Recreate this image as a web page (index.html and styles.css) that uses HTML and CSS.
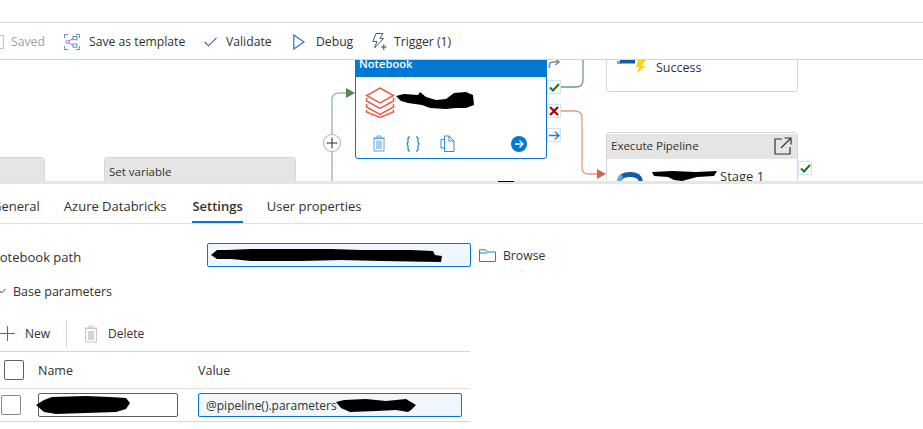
FILE: index.html
```html
<!DOCTYPE html>
<html lang="en">
<head>
<meta charset="utf-8">
<title>Pipeline editor</title>
<link rel="stylesheet" href="styles.css">
</head>
<body>
<div class="app">
  <div class="topbar"></div>
  <div class="toolbar">
    <div class="tool tool-saved">
      <svg class="ic-saved" width="4" height="14" viewBox="0 0 4 14"><path d="M-4 .5H3.5V13.5H-4" fill="none" stroke="#a6c8e8"/></svg>
      <span class="muted">Saved</span>
    </div>
    <div class="tool tool-template">
      <svg width="16" height="16" viewBox="0 0 16 16" fill="none" stroke-width="1"><path d="M.5 4V.5H4M12 .5h3.5V4M15.500 12v3.500H12M4 15.500H.5V12" stroke="#5b8fd0"/><circle cx="3.500" cy="8" r="1.600" stroke="#a875b8"/><rect x="9" y="2.500" width="4" height="3.200" stroke="#5b8fd0"/><rect x="9" y="10" width="4" height="3.200" stroke="#5b8fd0"/><path d="M5 7 9 4.500M5 9l4 2.500" stroke="#a875b8"/></svg>
      <span>Save as template</span>
    </div>
    <div class="tool tool-validate">
      <svg width="13" height="10" viewBox="0 0 13 10" fill="none"><path d="M.8 5 4.500 8.800 12.500.8" stroke="#2f5fa8" stroke-width="1.100"/></svg>
      <span>Validate</span>
    </div>
    <div class="tool tool-debug">
      <svg width="12" height="16" viewBox="0 0 12 16" fill="none"><path d="M.8 1v14L11 8z" stroke="#2f6fc4" stroke-width="1.200"/></svg>
      <span>Debug</span>
    </div>
    <div class="tool tool-trigger">
      <svg width="15" height="18" viewBox="0 0 15 18" fill="none" stroke="#3d5f8f" stroke-width="1"><path d="M4 .5h7L8 5.500h3.500L2.500 15 5 8.500H.8z"/><path d="M9 14h5.500M11.800 11.500v5.500" stroke="#444"/></svg>
      <span>Trigger (1)</span>
    </div>
  </div>

  <div class="canvas">
    <svg class="wires" width="923" height="121" viewBox="0 0 923 121" fill="none">
      <path d="M332 121V40q0-7 7-7h8" stroke="#9cc39c" stroke-width="1.500"/>
      <path d="M346 28l9 5-9 5z" fill="#4c8c4c"/>
      <path d="M560 27h16q7 0 7-7V0" stroke="#6ba06b" stroke-width="1.300"/>
      <path d="M560 51h15q7 0 7 7v50q0 6 7 6h9" stroke="#e89a80" stroke-width="1.300"/>
      <path d="M597 109l9 5-9 5z" fill="#d4674a"/>
    </svg>

    <div class="node node-stub">
      <div class="node-head"></div>
    </div>
    <div class="node node-setvar">
      <div class="node-head"><span>Set variable</span></div>
    </div>

    <div class="plus">
      <svg width="12" height="12" viewBox="0 0 12 12"><path d="M6 .5v11M.5 6h11" stroke="#333" stroke-width="1.100"/></svg>
    </div>

    <div class="node-notebook">
      <div class="nb-head">Notebook</div>
      <div class="nb-body">
        <svg class="bricks" width="30" height="31" viewBox="0 0 30 31" fill="none" stroke="#ef5b47" stroke-width="1.500">
          <path d="M15 1 28.500 8.500 15 16 1.500 8.500z"/>
          <path d="M1.500 11v3L15 21.500 28.500 14v-3"/>
          <path d="M1.500 17v3L15 27.500 28.500 20v-3"/>
          <path d="M1.500 23v2L15 30.500 28.500 25v-2"/>
        </svg>
        <svg class="blot" width="78" height="19" viewBox="0 0 78 19"><path d="M0 5 8 3 22 4 24 1 30 6 40 9 50 8 58 2 70 1 77 4 78 14 70 17 60 17 50 18 34 17 26 14 12 12 5 10z" fill="#000"/></svg>
      </div>
      <div class="nb-actions">
        <svg class="nb-ic" width="14" height="17" viewBox="0 0 14 17"><path d="M1 3h12M5 3V1h4v2" stroke="#5ba3e0" fill="none"/><path d="M2 3.500h10V16H2z" fill="#fff" stroke="#5ba3e0"/><path d="M4 5.500h6V14H4z" fill="#a7d0f0"/></svg>
        <svg class="nb-ic" width="14" height="16" viewBox="0 0 14 16" fill="none" stroke="#0078d4" stroke-width="1.100"><path d="M4 .8Q2 .8 2 3v3q0 2-1.500 2Q2 8 2 10v3q0 2.200 2 2.200M10 .8q2 0 2 2.200v3q0 2 1.500 2Q12 8 12 10v3q0 2.200-2 2.200"/></svg>
        <svg class="nb-ic" width="15" height="17" viewBox="0 0 15 17" fill="none" stroke="#2f8ad8"><path d="M4.500 4.500H1V13h3.500M4.500 1H9l5 5v10.500H4.500z"/><path d="M9 1v5h5"/></svg>
        <span class="nb-go">
          <svg width="10" height="10" viewBox="0 0 10 10" fill="none" stroke="#fff" stroke-width="1.300"><path d="M1 5h8M5.500 1.500 9 5 5.500 8.500"/></svg>
        </span>
      </div>
    </div>

    <div class="side side-skip"><svg width="12" height="10" viewBox="0 0 12 10" fill="none"><path d="M1.500 10V7q0-3 4-3h5M7.500 1 11 4 7.500 7" stroke="#8a8a8a" stroke-width="1.600"/></svg></div>
    <div class="side side-ok"><svg width="11" height="9" viewBox="0 0 11 9" fill="none"><path d="M1 4.500 4 7.500 10 1" stroke="#107c10" stroke-width="2"/></svg></div>
    <div class="side side-fail"><svg width="10" height="10" viewBox="0 0 10 10" fill="none"><path d="M1 1l8 8M9 1 1 9" stroke="#a80000" stroke-width="2.200"/></svg></div>
    <div class="side side-done"><svg width="11" height="9" viewBox="0 0 11 9" fill="none"><path d="M0 4.500h10M6 .8l4 3.700-4 3.700" stroke="#1a7ed4" stroke-width="1.300"/></svg></div>

    <div class="node node-success">
      <svg class="ic-pipe" width="30" height="13" viewBox="0 0 30 13"><path d="M0 1h4v3H0z" fill="#59b4d9"/><path d="M3 0h15v3.500H3z" fill="#0f5da8"/><path d="M21 0h8l-5 6h5L20 13l2-6h-3z" fill="#fcd116"/></svg>
      <span>Success</span>
    </div>

    <div class="node node-exec">
      <div class="node-head exec-head">
        <span>Execute Pipeline</span>
        <svg width="18" height="18" viewBox="0 0 18 18" fill="none" stroke="#333" stroke-width="1.200"><path d="M8 2H1v15h15v-7M7 11 17 1M10.500 1H17v6.500"/></svg>
      </div>
      <div class="exec-body">
        <svg width="27" height="12" viewBox="0 0 27 12"><path d="M0 12Q0 1 13 1T26 12h-4Q22 6 13 6T4 12z" fill="#0f5da8"/><path d="M0 12Q0 5 4 3l2 3Q4 8 4 12z" fill="#59b4d9"/></svg>
        <svg class="blot2" width="65" height="10" viewBox="0 0 65 10"><path d="M0 1 20 0 44 1 65 0 62 5 45 6 30 10 22 9 16 6 2 5z" fill="#000"/></svg>
        <span class="stage">Stage 1</span>
      </div>
    </div>
    <div class="side side-exec"><svg width="11" height="9" viewBox="0 0 11 9" fill="none"><path d="M1 4.500 4 7.500 10 1" stroke="#107c10" stroke-width="2"/></svg></div>
  </div>

  <div class="divider"><span class="grip"></span></div>

  <div class="tabs">
    <span class="tab tab-general">General</span>
    <span class="tab">Azure Databricks</span>
    <span class="tab tab-active">Settings</span>
    <span class="tab">User properties</span>
  </div>

  <div class="panel">
    <div class="path-row">
      <label class="path-label">Notebook path</label>
      <div class="field field-path">
        <svg width="231" height="15" viewBox="0 0 231 15"><path d="M0 7 6 2 16 2 40 1 120 1 150 2 200 2 222 3 224 7 231 8 230 14 170 13 130 12 90 13 40 13 20 11 6 11z" fill="#000"/></svg>
      </div>
      <svg class="folder" width="17" height="13" viewBox="0 0 17 13" fill="none" stroke="#2f7fc8"><path d="M.5 12.500V.8h6l2 2.200h8v9.500zM.5 4h8"/></svg>
      <span>Browse</span>
    </div>
    <div class="section">
      <svg width="6" height="5" viewBox="0 0 6 5" fill="none"><path d="M-1 1 1.500 4 5.500 0" stroke="#444"/></svg>
      <span>Base parameters</span>
    </div>
    <div class="actions">
      <svg width="15" height="15" viewBox="0 0 15 15"><path d="M7.500 0v15M0 7.500h15" stroke="#2b78c5" stroke-width="1.100"/></svg>
      <span class="act-new">New</span>
      <span class="act-sep"></span>
      <svg class="act-trash" width="14" height="18" viewBox="0 0 14 18" fill="none"><path d="M.5 3h13M5 3V1h4v2" stroke="#c8c8c8"/><path d="M1.500 3.500h11V17h-11z" stroke="#c8c8c8"/><path d="M4 6h6v9H4z" fill="#dfcfcf"/></svg>
      <span>Delete</span>
    </div>
    <div class="grid grid-head">
      <span class="check check-head"></span>
      <span class="col-h">Name</span>
      <span class="col-h">Value</span>
    </div>
    <div class="grid grid-row">
      <span class="check check-row"></span>
      <div class="field field-name">
        <svg width="94" height="20" viewBox="0 0 94 20"><path d="M0 10 8 5 16 2 50 1 74 2 90 3 94 8 90 14 80 17 50 18 20 19 8 17z" fill="#000"/></svg>
      </div>
      <div class="field field-value">
        <span>@pipeline().parameters</span>
        <svg width="82" height="15" viewBox="0 0 82 15"><path d="M0 4 8 2 30 1 50 3 70 1 80 7 75 12 72 14 60 12 40 13 14 14 5 10z" fill="#000"/></svg>
      </div>
    </div>
  </div>
</div>
</body>
</html>
```
FILE: styles.css
```css
* { box-sizing: border-box; }
html, body { margin: 0; padding: 0; background: #fff; }
body {
  width: 923px;
  height: 429px;
  overflow: hidden;
  font-family: "Open Sans", "Noto Sans", "Liberation Sans", sans-serif;
  font-size: 12px;
  color: #323130;
}
.app { width: 923px; height: 429px; overflow: hidden; }

.topbar { height: 23px; border-bottom: 1px solid #d6d6d6; }
.toolbar {
  height: 37px;
  border-bottom: 1px solid #d6d6d6;
  display: flex;
  align-items: center;
  padding-top: 1px;
  font-size: 12.200px;
}
.tool { display: flex; align-items: center; }
.muted { color: #a19f9d; }
.tool-saved { gap: 7px; width: 64px; }
.tool-template { gap: 9px; width: 140px; }
.tool-validate { gap: 9px; width: 89px; }
.tool-debug { gap: 11px; width: 79px; }
.tool-trigger { gap: 7px; }

.canvas { position: relative; height: 121px; overflow: hidden; background: #fff; }
.wires { position: absolute; left: 0; top: 0; }

.node {
  position: absolute;
  width: 192px;
  background: #fff;
  border: 1px solid #d6d6d6;
  border-radius: 3px;
}
.node-head {
  background: #e5e5e5;
  height: 26px;
  display: flex;
  align-items: center;
  padding: 0 4px;
  font-size: 11.500px;
}
.node-stub { left: -147px; top: 97px; height: 40px; }
.node-setvar { left: 104px; top: 97px; height: 40px; }
.node-setvar .node-head { padding-top: 1px; }

.plus {
  position: absolute;
  left: 323px;
  top: 74px;
  width: 18px;
  height: 18px;
  border-radius: 50%;
  background: #fff;
  border: 1px solid #b0b0b0;
  display: flex;
  align-items: center;
  justify-content: center;
}

.node-notebook {
  position: absolute;
  left: 355px;
  top: -10px;
  width: 192px;
  height: 109px;
  background: #fff;
  border: 1px solid #0078d4;
  border-radius: 3px;
  display: flex;
  flex-direction: column;
}
.nb-head {
  height: 26px;
  flex: none;
  background: #0078d4;
  color: #fff;
  font-size: 11.200px;
  font-weight: 600;
  display: flex;
  align-items: flex-end;
  padding: 0 4px 5px 3px;
  line-height: 16px;
}
.nb-body { display: flex; align-items: flex-start; padding: 10px 0 0 9px; height: 58px; flex: none; }
.bricks { flex: none; }
.blot { flex: none; margin: 4px 0 0 1px; }
.nb-actions { display: flex; align-items: center; padding: 0 0 0 16px; gap: 20px; }
.nb-ic { flex: none; }
.nb-go {
  width: 16px;
  height: 16px;
  border-radius: 50%;
  background: #0078d4;
  margin-left: 36px;
  display: flex;
  align-items: center;
  justify-content: center;
}

.side {
  position: absolute;
  width: 14px;
  height: 14px;
  background: #fff;
  border: 1px solid #cfe4f6;
  display: flex;
  align-items: center;
  justify-content: center;
}
.side-skip { left: 547px; top: -3px; height: 12px; border-color: transparent; }
.side-ok { left: 547px; top: 20px; }
.side-fail { left: 547px; top: 44px; }
.side-done { left: 547px; top: 68px; }
.side-exec { left: 798px; top: 101px; }

.node-success {
  left: 606px;
  top: -20px;
  height: 52px;
  display: flex;
  align-items: flex-start;
  padding: 19px 0 0 10px;
  font-size: 12.500px;
}
.node-success span { margin: -1px 0 0 9px; line-height: 17px; }
.ic-pipe { flex: none; }

.node-exec { left: 606px; top: 72px; height: 60px; }
.exec-head {
  height: 25px;
  margin-top: 1px;
  justify-content: space-between;
  padding: 0 5px 2px 4px;
  font-size: 11.500px;
}
.exec-body { display: flex; align-items: flex-start; padding: 12px 0 0 10px; line-height: 14px; font-size: 13px; }
.blot2 { flex: none; margin: 0 3px 0 8px; }
.stage { margin-top: -2px; }

.divider { height: 3px; background: #e6e6e6; position: relative; }
.grip { position: absolute; left: 498px; top: 0; width: 16px; height: 1px; background: #000; }

.tabs {
  height: 40px;
  border-bottom: 1px solid #e1e1e1;
  display: flex;
  gap: 24px;
  font-size: 13px;
}
.tab {
  display: flex;
  align-items: center;
  height: 39px;
  padding-top: 7px;
  border-bottom: 2px solid transparent;
  white-space: nowrap;
}
.tab-general { margin-left: -8px; }
.tab-active {
  margin-left: 2px;
  font-weight: 600;
  border-bottom-color: #0078d4;
}

.panel { display: flex; flex-direction: column; }
.path-row { display: flex; align-items: center; height: 24px; margin-top: 19px; font-size: 12.200px; }
.path-label { width: 217px; margin-left: -10px; padding-top: 4px; font-size: 13px; flex: none; }
.field {
  height: 24px;
  display: flex;
  align-items: center;
  border: 1px solid #0078d4;
  border-radius: 2px;
  background: #eff6fc;
  overflow: hidden;
}
.field-path { width: 264px; padding-left: 3px; flex: none; }
.folder { margin: 0 7px 0 8px; flex: none; }

.section { display: flex; align-items: center; gap: 7px; margin-top: 14px; height: 20px; font-weight: 500; font-size: 12.500px; }

.actions { display: flex; align-items: center; height: 27px; margin-top: 19px; }
.act-new { margin-left: 10px; width: 41px; }
.act-sep { width: 1px; height: 27px; background: #d6d6d6; }
.act-trash { margin: 0 10px 0 17px; }

.grid { display: grid; grid-template-columns: 38px 160px 264px; width: 470px; align-items: center; }
.grid-head {
  height: 38px;
  margin-top: 4px;
  border-top: 1px solid #d6d6d6;
  border-bottom: 1px solid #e1e1e1;
}
.col-h { font-weight: 500; font-size: 12.500px; }
.check { display: block; width: 20px; height: 20px; border: 1px solid #605e5c; border-radius: 2px; background: #fff; }
.check-head { margin-left: 4px; }
.check-row { margin-left: 1px; border-color: #8a8886; }
.grid-row { height: 33px; border-bottom: 1px solid #d6d6d6; }
.field-name {
  width: 140px;
  background: #fff;
  border-color: #605e5c;
  overflow: visible;
}
.field-name svg { margin-left: -3px; flex: none; }
.field-value { width: 264px; padding-left: 7px; }
.field-value span { white-space: nowrap; }
.field-value svg { flex: none; margin-left: -1px; }
```
